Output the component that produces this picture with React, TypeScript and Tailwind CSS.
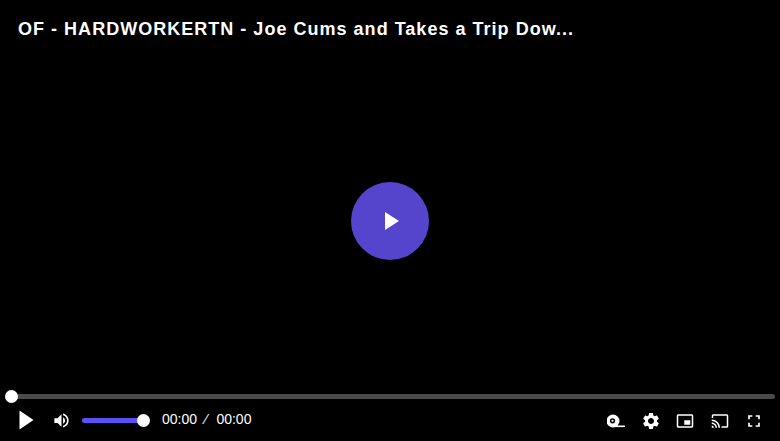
import { MdCast, MdFullscreen, MdPictureInPictureAlt, MdSettings, MdVolumeUp } from 'react-icons/md'

function TapeIcon() {
  return (
    <svg width="18" height="14" viewBox="0 0 18 14" fill="none">
      <circle cx="6" cy="7" r="6.5" fill="#fff" />
      <circle cx="5.5" cy="6.8" r="2.6" fill="#000" />
      <circle cx="5.5" cy="6.8" r="1.1" fill="#fff" />
      <rect x="6" y="11.5" width="12" height="1.6" fill="#fff" />
    </svg>
  )
}

export default function App() {
  return (
    <div className="relative flex h-[441px] w-[780px] flex-col overflow-hidden bg-black font-['Liberation_Sans',Arial,sans-serif] text-white">
      <div className="pl-[18px] pt-[18px] text-[18px] font-bold leading-[22px] tracking-[1.02px]">
        OF - HARDWORKERTN - Joe Cums and Takes a Trip Dow...
      </div>

      <div className="absolute left-[351px] top-[182px] flex h-[78px] w-[78px] items-center justify-center rounded-full bg-[#5445cc]">
        <svg width="16" height="20" viewBox="0 0 16 20" className="ml-[4px]">
          <polygon points="1,1 15,10 1,19" fill="#fff" />
        </svg>
      </div>

      <div className="mt-auto px-[5px]">
        <div className="relative h-[5px] rounded-full bg-[#4a4a4a]">
          <div className="absolute left-0 top-[-4px] h-[13px] w-[13px] rounded-full bg-white" />
        </div>
      </div>

      <div className="flex h-[42px] items-center pl-[19px] pr-[16px] pt-[1px]">
        <svg width="15" height="20" viewBox="0 0 15 20" className="mt-[-2px]">
          <polygon points="0.5,0.5 14.5,10 0.5,19.5" fill="#fff" />
        </svg>
        <MdVolumeUp size={19} className="ml-[18px]" />
        <div className="relative ml-[11px] h-[5px] w-[62px] rounded-full bg-[#5b4ff5]">
          <div className="absolute right-[-6px] top-[-4px] h-[13px] w-[13px] rounded-full bg-white" />
        </div>
        <div className="ml-[18px] mt-[-3px] flex text-[14px] leading-none">
          <span>00:00</span>
          <span className="ml-[8px]">⁄</span>
          <span className="ml-[9px]">00:00</span>
        </div>
        <div className="ml-auto flex items-center">
          <TapeIcon />
          <MdSettings size={20} className="ml-[16px]" />
          <MdPictureInPictureAlt size={18} className="ml-[15px]" />
          <MdCast size={18} className="ml-[17px]" />
          <MdFullscreen size={20} className="ml-[15px]" />
        </div>
      </div>
    </div>
  )
}
